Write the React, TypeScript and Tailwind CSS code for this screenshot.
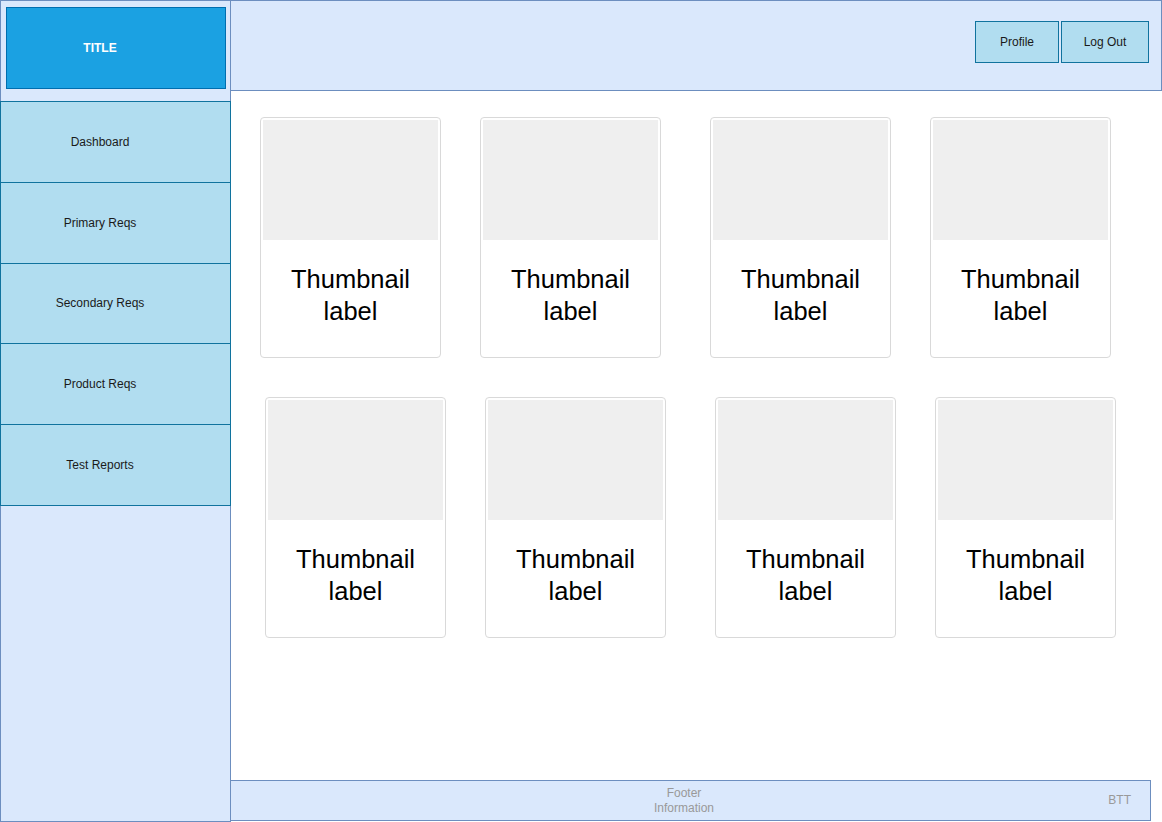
const navItems = [
  { label: "Dashboard", h: "h-[82px]" },
  { label: "Primary Reqs", h: "h-[82px]" },
  { label: "Secondary Reqs", h: "h-[81px]" },
  { label: "Product Reqs", h: "h-[82px]" },
  { label: "Test Reports", h: "h-[82px]" },
];

const ThumbCard = ({ className = "" }: { className?: string }) => {
  return (
    <div
      className={`w-[181px] h-[241px] shrink-0 bg-white border border-[#d9d9d9] rounded-[4px] px-[2px] pt-[2px] flex flex-col ${className}`}
    >
      <div className="h-[120px] bg-[#efefef]" />
      <p className="mt-[23px] text-center text-[25.5px] leading-[32px] text-black">
        Thumbnail
        <br />
        label
      </p>
    </div>
  );
};

const Sidebar = () => {
  return (
    <aside className="w-[231px] h-[822px] shrink-0 bg-[#dae8fc] border border-[#6c8ebf] flex flex-col">
      <div className="ml-[5px] mt-[6px] w-[220px] h-[82px] bg-[#1ba1e2] border border-[#006eaf] flex items-center">
        <span className="w-[186px] text-center text-[12px] font-bold text-white">TITLE</span>
      </div>
      <nav className="mt-[12px] -mx-px flex flex-col">
        {navItems.map((item, i) => (
          <div
            key={item.label}
            className={`${item.h} pb-px bg-[#b1ddf0] border border-[#10739e] flex items-center ${i > 0 ? "-mt-px" : ""}`}
          >
            <span className="w-[198px] text-center text-[12px] text-[#1a1a1a]">{item.label}</span>
          </div>
        ))}
      </nav>
    </aside>
  );
};

const Header = () => {
  return (
    <header className="h-[91px] w-[932px] bg-[#dae8fc] border border-[#6c8ebf] flex justify-end items-start pt-[20px] pr-[12px] gap-[2px]">
      <button className="w-[84px] h-[42px] bg-[#b1ddf0] border border-[#10739e] text-[12px] text-[#1a1a1a]">
        Profile
      </button>
      <button className="w-[88px] h-[42px] bg-[#b1ddf0] border border-[#10739e] text-[12px] text-[#1a1a1a]">
        Log Out
      </button>
    </header>
  );
};

export default function App() {
  return (
    <div className="w-[1162px] h-[822px] bg-white flex font-['Liberation_Sans',Arial,sans-serif] overflow-hidden">
      <Sidebar />
      <div className="-ml-px flex flex-col h-[822px]">
        <Header />
        <main className="flex-1 pt-[26px] flex flex-col gap-[39px]">
          <div className="flex pl-[30px]">
            <ThumbCard />
            <ThumbCard className="ml-[39px]" />
            <ThumbCard className="ml-[49px]" />
            <ThumbCard className="ml-[39px]" />
          </div>
          <div className="flex pl-[35px]">
            <ThumbCard />
            <ThumbCard className="ml-[39px]" />
            <ThumbCard className="ml-[49px]" />
            <ThumbCard className="ml-[39px]" />
          </div>
        </main>
        <footer className="w-[921px] h-[41px] mb-px bg-[#dae8fc] border border-[#6c8ebf] flex items-center text-[12px] leading-[15px] text-[#999999]">
          <div className="ml-[393px] w-[120px] text-center">
            Footer
            <br />
            Information
          </div>
          <div className="ml-auto mr-[19px]">BTT</div>
        </footer>
      </div>
    </div>
  );
}
